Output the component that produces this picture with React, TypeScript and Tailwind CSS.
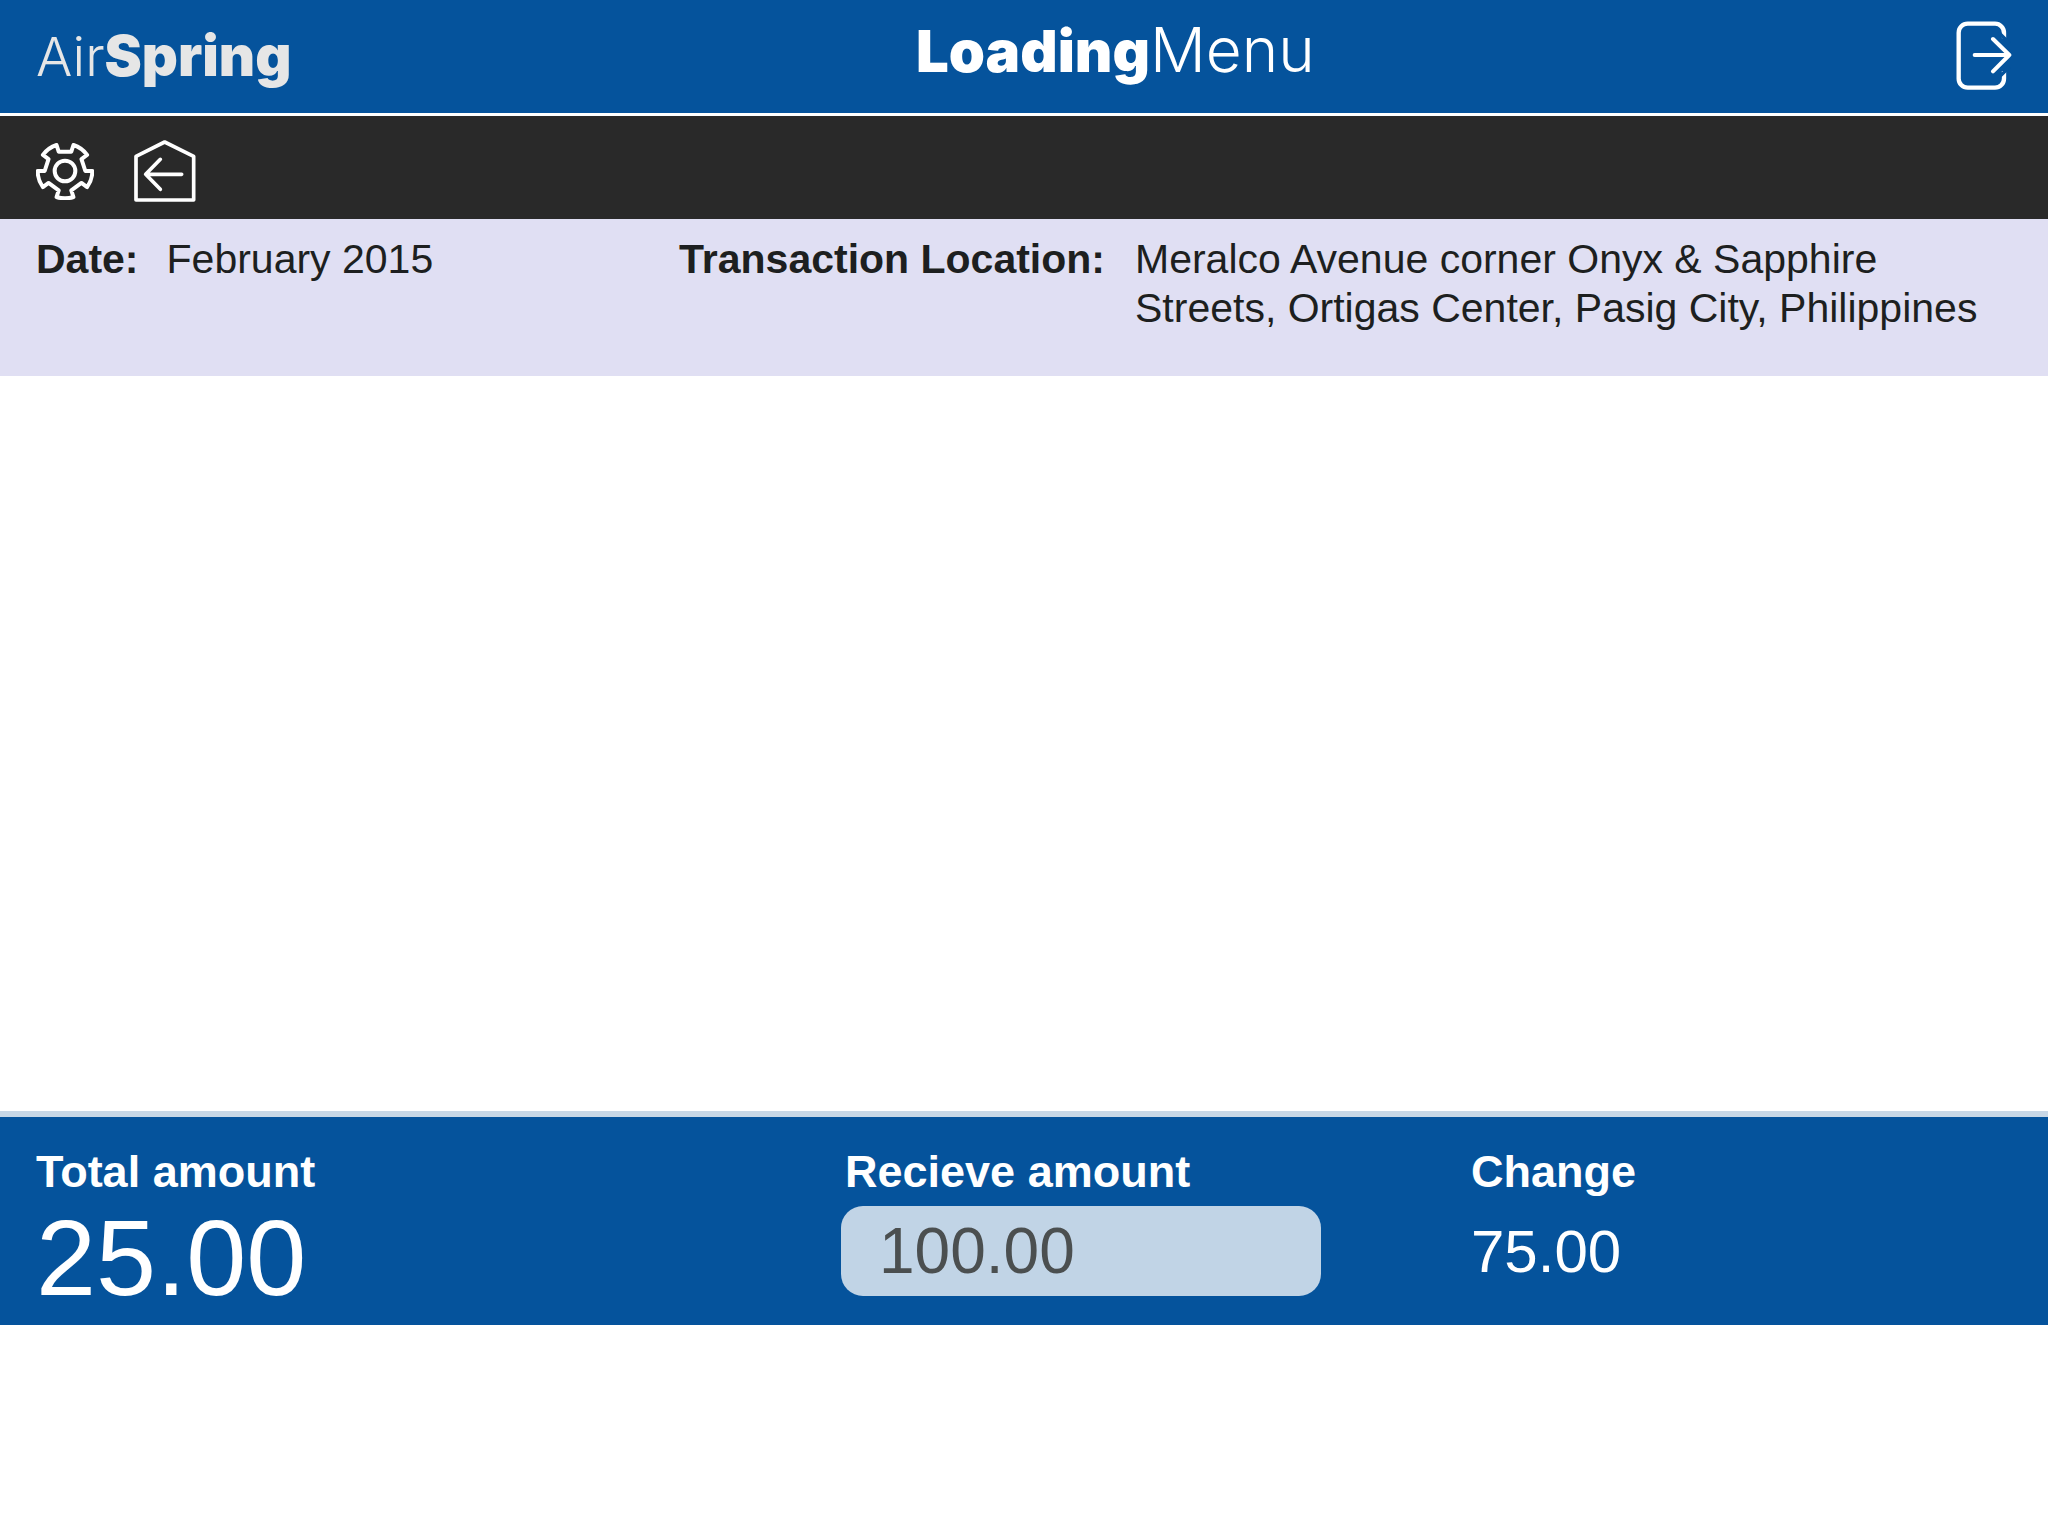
const TEETH = 5;
const OUTER = 82;
const INNER = 61;

function polar(radius: number, degrees: number) {
  const a = (degrees * Math.PI) / 180;
  return `${(radius * Math.sin(a)).toFixed(1)} ${(radius * Math.cos(a)).toFixed(1)}`;
}

const gearPath =
  Array.from({ length: TEETH }, (_, i) => {
    const mid = i * 72;
    const start = i === 0 ? "M" : "L";
    return `${start}${polar(INNER, mid - 18)} L${polar(OUTER, mid - 18)} A${OUTER} ${OUTER} 0 0 0 ${polar(OUTER, mid + 18)} L${polar(INNER, mid + 18)}`;
  }).join(" ") + " Z";

function GearIcon() {
  return (
    <svg viewBox="-87 -87 174 174" className="size-[58px]" fill="none" stroke="currentColor" strokeWidth="12" strokeLinejoin="round" aria-hidden="true">
      <path d={gearPath} />
      <circle r="31" />
    </svg>
  );
}

function HomeBackIcon() {
  return (
    <svg viewBox="401 421 186 186" className="size-[62px]" fill="none" stroke="currentColor" strokeWidth="11" strokeLinecap="round" strokeLinejoin="round" aria-hidden="true">
      <path d="M407 470 L493 427 L580 470 V601 H407 Z" />
      <path d="M544 524 H437 M480 479 L436 524 L480 569" />
    </svg>
  );
}

function ExitIcon() {
  return (
    <svg viewBox="170 62 168 207" className="h-[69px] w-[56px]" fill="none" stroke="currentColor" aria-hidden="true">
      <path strokeWidth="13" d="M314 114 V98 A27 27 0 0 0 287 70 H205 A27 27 0 0 0 178 97 V235 A27 27 0 0 0 205 262 H287 A27 27 0 0 0 314 235 V212" />
      <path className="stroke-[#05539c]" strokeWidth="10" d="M298 96 L330 128 M298 232 L330 200" />
      <path strokeWidth="12" strokeLinecap="round" strokeLinejoin="round" d="M226 164 H330 M281 116 L330 164 L281 213" />
    </svg>
  );
}

export default function App() {
  return (
    <div className="flex min-h-screen flex-col bg-white font-['Liberation_Sans',Arial,sans-serif]">
      <header className="grid h-[116px] grid-cols-[880fr_1040fr_56px] items-center border-b-3 border-white bg-[#05539c] px-9 font-[Inter,sans-serif] text-[56px] leading-none text-white">
        <div className="pb-0.5 text-[#e6e6e6]">
          <span className="text-[54px] font-light">Air</span>
          <span className="font-black">Spring</span>
        </div>
        <h1 className="pb-3.5">
          <span className="text-[58px] font-black">Loading</span>
          <span className="text-[62px] font-light">Menu</span>
        </h1>
        <button type="button" aria-label="Log out" className="pb-0.5">
          <ExitIcon />
        </button>
      </header>

      <nav className="flex h-[103px] items-center gap-10 bg-[#292929] px-9 pt-1.5 text-white">
        <button type="button" aria-label="Settings">
          <GearIcon />
        </button>
        <button type="button" aria-label="Back to home">
          <HomeBackIcon />
        </button>
      </nav>

      <dl className="grid min-h-[157px] grid-cols-[643fr_1333fr] bg-[#e0dff3] px-9 pt-4 text-[41px] leading-[49px] text-[#1d1f20]">
        <div className="flex gap-7">
          <dt className="font-bold">Date:</dt>
          <dd>February 2015</dd>
        </div>
        <div className="flex gap-[30px]">
          <dt className="shrink-0 font-bold">Transaction Location:</dt>
          <dd className="text-nowrap">
            Meralco Avenue corner Onyx &amp; Sapphire
            <br />
            Streets, Ortigas Center, Pasig City, Philippines
          </dd>
        </div>
      </dl>

      <main className="flex-1" />

      <form className="grid h-[214px] grid-cols-[805fr_630fr_541fr] border-t-6 border-[#c7d7e6] bg-[#05539c] px-9 pt-[29px] text-white" onSubmit={(e) => e.preventDefault()}>
        <div>
          <h2 className="text-[45px] leading-[52px] font-bold">Total amount</h2>
          <output className="block text-[108px] leading-[120px]">25.00</output>
        </div>
        <div>
          <label htmlFor="received" className="block pl-1 text-[45px] leading-[52px] font-bold">
            Recieve amount
          </label>
          <input
            id="received"
            type="text"
            inputMode="decimal"
            defaultValue="100.00"
            className="mt-2 block h-[90px] w-[480px] rounded-[22px] bg-[#c1d4e6] px-[38px] text-[64px] text-[#4b4f50] outline-none"
          />
        </div>
        <div>
          <h2 className="text-[45px] leading-[52px] font-bold">Change</h2>
          <output className="mt-[18px] block text-[60px] leading-[72px]">75.00</output>
        </div>
      </form>

      <div className="h-[211px] bg-white" />
    </div>
  );
}
